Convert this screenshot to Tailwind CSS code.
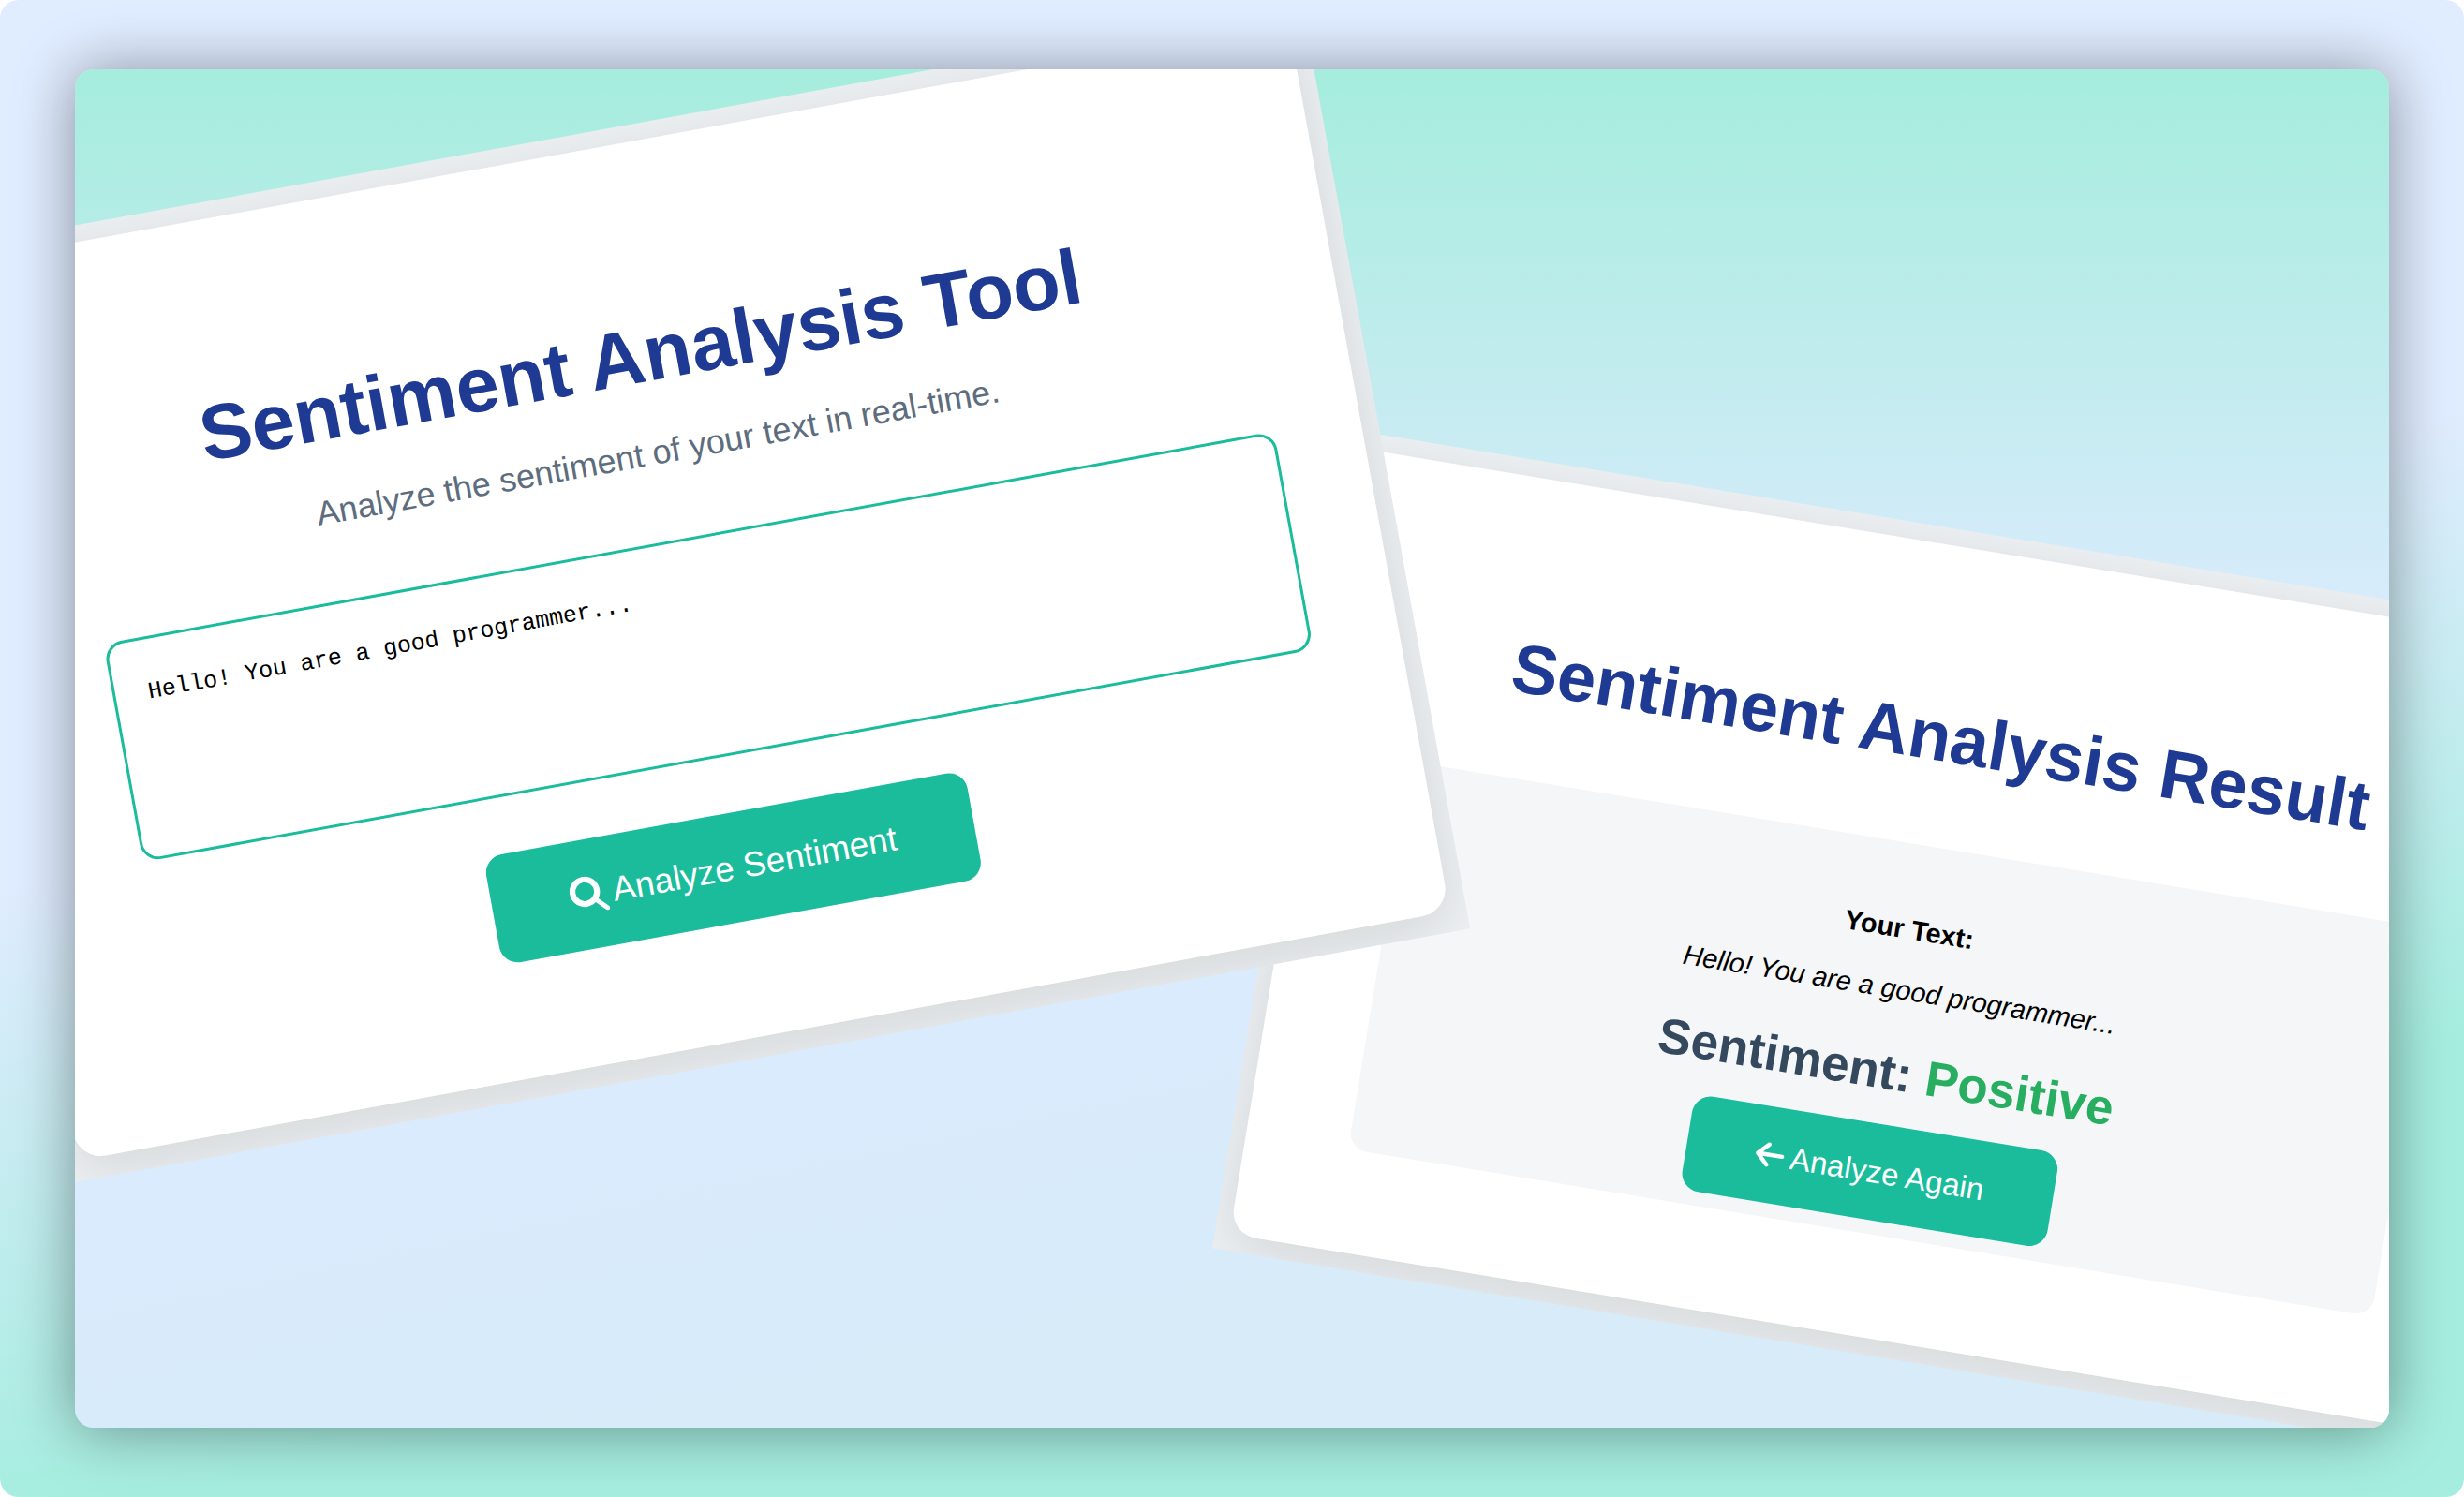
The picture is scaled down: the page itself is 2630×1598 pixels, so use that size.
<!DOCTYPE html>
<html lang="en">
<head>
<meta charset="utf-8">
<meta name="viewport" content="width=device-width, initial-scale=1">
<title>Sentiment Analysis Tool</title>
<script src="https://cdn.jsdelivr.net/npm/@tailwindcss/browser@4"></script>
</head>
<body class="bg-white font-['Liberation_Sans',Arial,sans-serif]">
<div class="flex min-h-screen rounded-[20px] bg-[linear-gradient(169deg,#e0ecff_0%,#e0ecff_45%,#a5eddf_77%,#a5eddf_100%)] px-20 py-[74px]">
  <main class="relative flex-1 overflow-hidden rounded-[20px] bg-[linear-gradient(180deg,#a5eddd_0%,#a5eddd00_41%),linear-gradient(168deg,#daebfd_60%,#d7ebf9_80%)] shadow-[0_2px_64px_rgba(0,0,0,0.4)]">

    <!-- Result screen -->
    <section class="absolute left-[1357px] top-96 w-[1359px] origin-top-left rotate-[9.3deg] overflow-hidden bg-[#ecf0f2] px-4 pt-[18px] pb-[18px]">
      <div class="h-[850px] rounded-[28px] bg-white px-[110px] pt-[162px] text-center shadow-[0_16px_60px_rgba(0,0,0,0.1)]">
        <h1 class="text-[74px] leading-[84px] font-bold whitespace-nowrap text-[#1f3a93]">Sentiment Analysis Result</h1>
        <div class="mt-[75px] flex h-[419px] flex-col items-center rounded-[20px] bg-[#f4f6f8] pt-[74px]">
          <p class="text-[29px] leading-[34px] font-bold text-black">Your Text:</p>
          <p class="mt-[31px] text-[29px] leading-[34px] text-black italic">Hello! You are a good programmer...</p>
          <h2 class="mt-[42px] text-[53px] leading-[60px] font-bold text-[#34495e]">Sentiment: <span class="text-[#27ae60]">Positive</span></h2>
          <button type="button" class="mt-[26px] flex h-[103px] w-[395px] shrink-0 items-center justify-center gap-[6px] rounded-[20px] bg-[#1abc9c] text-[33px] leading-10 text-white">
            <svg class="h-[35px] w-[31px]" viewBox="0 0 448 512" fill="currentColor" aria-hidden="true"><path d="M9.4 233.4c-12.5 12.5-12.5 32.8 0 45.3l160 160c12.5 12.5 32.8 12.5 45.3 0s12.5-32.8 0-45.3L109.2 288 416 288c17.700 0 32-14.300 32-32s-14.300-32-32-32l-306.700 0L214.600 118.600c12.500-12.500 12.500-32.800 0-45.300s-32.800-12.500-45.300 0l-160 160z"/></svg>
            <span>Analyze Again</span>
          </button>
        </div>
      </div>
    </section>

    <!-- Input screen -->
    <section class="absolute top-[201px] -left-[190px] w-[1524px] origin-top-left -rotate-[10.3deg] overflow-hidden bg-[#ecf0f2] px-[18px] pt-[18px] pb-[22px]">
      <form class="flex h-[965px] flex-col items-center rounded-[30px] bg-white px-[125px] pt-[180px] shadow-[0_16px_60px_rgba(0,0,0,0.1)]">
        <h1 class="text-[83px] leading-[94px] font-bold whitespace-nowrap text-[#1f3a93]">Sentiment Analysis Tool</h1>
        <label for="text" class="mt-[37px] text-[36px] leading-[42px] text-[#5d6d7e]">Analyze the sentiment of your text in real-time.</label>
        <textarea id="text" class="mt-[74px] -mr-8 h-[237px] w-[1270px] shrink-0 resize-none self-start rounded-[20px] border-3 border-[#1abc9c] bg-white px-[35px] pt-[40px] font-['Liberation_Mono',monospace] text-[25px] leading-[34px] text-black outline-none">Hello! You are a good programmer...</textarea>
        <button type="button" class="mt-[60px] flex h-[117px] w-[522px] shrink-0 items-center justify-center gap-[6px] rounded-[20px] bg-[#1abc9c] text-[37px] leading-10 text-white">
          <svg class="size-10" viewBox="0 0 512 512" fill="currentColor" aria-hidden="true"><path d="M416 208c0 45.900-14.900 88.300-40 122.700L502.600 457.400c12.500 12.500 12.500 32.800 0 45.300s-32.800 12.500-45.300 0L330.700 376c-34.400 25.200-76.800 40-122.700 40C93.100 416 0 322.900 0 208S93.100 0 208 0S416 93.100 416 208zM208 336a128 128 0 1 0 0-256 128 128 0 1 0 0 256z"/></svg>
          <span>Analyze Sentiment</span>
        </button>
      </form>
    </section>
  </main>
</div>
</body>
</html>
